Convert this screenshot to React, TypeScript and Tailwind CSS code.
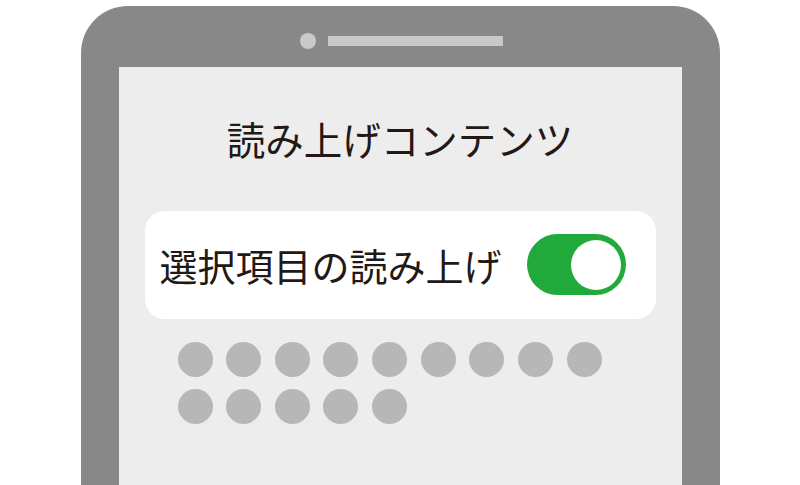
export default function App() {
  const row1 = Array.from({ length: 9 });
  const row2 = Array.from({ length: 5 });

  return (
    <div className="h-[485px] w-[800px] overflow-hidden bg-white flex justify-center pt-[6px] font-['Noto_Sans_CJK_JP','Noto_Sans',sans-serif]">
      <div className="w-[639px] h-[520px] bg-[#888888] rounded-t-[47px] flex flex-col">
        {/* camera + speaker */}
        <div className="h-[61px] flex items-center justify-center pt-[9px] pl-[3px] gap-[12px]">
          <div className="w-[16px] h-[16px] rounded-full bg-[#c8c9cb]" />
          <div className="w-[175px] h-[10px] bg-[#c8c9cb]" />
        </div>

        <div className="mx-[38px] flex-1 bg-[#ededed] flex flex-col">
          <h1 className="text-center text-[38.5px] leading-none text-[#231815] mt-[52px]">
            読み上げコンテンツ
          </h1>

          <div className="mx-[26px] mt-[53px] h-[108px] bg-white rounded-[20px] flex items-center justify-between pl-[15px] pr-[30px]">
            <span className="text-[38px] leading-none text-[#231815]">
              選択項目の読み上げ
            </span>
            <div className="w-[99px] h-[61px] rounded-full bg-[#21a93c] flex items-center justify-end pr-[5px]">
              <div className="w-[50px] h-[50px] rounded-full bg-white" />
            </div>
          </div>

          <div className="ml-[59px] mt-[23px] flex flex-col gap-y-[12px]">
            <div className="flex gap-x-[13.66px]">
              {row1.map((_, i) => (
                <div key={i} className="w-[35px] h-[35px] rounded-full bg-[#b6b7b6]" />
              ))}
            </div>
            <div className="flex gap-x-[13.66px]">
              {row2.map((_, i) => (
                <div key={i} className="w-[35px] h-[35px] rounded-full bg-[#b6b7b6]" />
              ))}
            </div>
          </div>
        </div>
      </div>
    </div>
  );
}
